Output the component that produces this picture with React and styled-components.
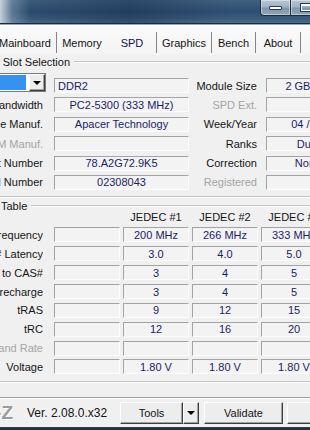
import React from 'react'
import styled, { createGlobalStyle } from 'styled-components'

const GlobalStyle = createGlobalStyle`
  html, body {
    margin: 0;
    padding: 0;
  }
  body {
    width: 310px;
    height: 430px;
    overflow: hidden;
    background: #f0f0f0;
    font-family: "Liberation Sans", Arial, sans-serif;
    font-size: 11px;
    color: #141414;
  }
`

const Window = styled.div`
  display: flex;
  flex-direction: column;
  width: 310px;
  height: 430px;
  overflow: hidden;
`

// aero caption
const TitleBar = styled.div`
  flex: none;
  height: 23px;
  display: flex;
  justify-content: flex-end;
  align-items: flex-start;
  border-bottom: 1px solid #1b2b3b;
  background:
    linear-gradient(to right, rgba(214, 222, 230, 0.9) 0, rgba(150, 170, 190, 0.45) 12px, rgba(60, 90, 120, 0) 30px),
    linear-gradient(to right, rgba(0, 0, 0, 0) 0, rgba(10, 30, 60, 0.35) 130px, rgba(0, 0, 0, 0) 230px),
    linear-gradient(to bottom, #41617f 0%, #2f4f71 50%, #3a5a7b 78%, #4d6c8b 100%);
`

const CaptionButtons = styled.div`
  display: flex;
  margin-right: -11px;
`

const CaptionButton = styled.div`
  flex: none;
  width: ${({ $w }) => $w}px;
  height: 16px;
  box-sizing: border-box;
  display: flex;
  align-items: center;
  justify-content: center;
  border: 1px solid #1e2d3d;
  border-top: none;
  border-left-width: ${({ $first }) => ($first ? 1 : 0)}px;
  border-radius: ${({ $first }) => ($first ? '0 0 0 4px' : '0')};
  background: linear-gradient(to bottom, #bac7d4 0%, #a0b2c4 45%, #8096ac 55%, #8fa5ba 100%);
  box-shadow: inset 0 0 0 1px rgba(255, 255, 255, 0.4);
`

const MinGlyph = styled.span`
  width: 11px;
  height: 2px;
  background: #fff;
  border: 1px solid #2a3a4c;
  border-radius: 1px;
`

const MaxGlyph = styled.span`
  width: 8px;
  height: 4px;
  border: 1px solid #fff;
  border-top-width: 2px;
  box-shadow: 0 0 0 1px #2a3a4c;
`

const TabStrip = styled.div`
  flex: none;
  height: 30px;
  display: flex;
  align-items: flex-end;
  margin-left: -6px;
  border-top: 1px solid #9aa8b6;
  background: linear-gradient(to bottom, #fbfbfb, #f3f3f3);
`

const Tab = styled.div`
  flex: none;
  width: ${({ $w }) => $w}px;
  height: 21px;
  margin-bottom: 2px;
  box-sizing: border-box;
  display: flex;
  align-items: center;
  justify-content: center;
  white-space: nowrap;
  border-right: 1px solid ${({ $divider }) => ($divider ? '#858585' : 'transparent')};
  color: ${({ $active }) => ($active ? '#10104a' : '#141414')};
`

const Panel = styled.div`
  flex: none;
  height: 341px;
  padding-top: 1px;
  display: flex;
  flex-direction: column;
  border-bottom: 1px solid #9d9d9d;
`

const Group = styled.section`
  display: flex;
  flex-direction: column;
  padding-bottom: ${({ $pb }) => $pb}px;
  border-bottom: 1px solid #c3c3c3;
  box-shadow: 0 1px 0 #fff;
`

const GroupHeader = styled.div`
  height: 12px;
  display: flex;
  align-items: center;
  gap: 4px;
  margin-top: ${({ $mt }) => $mt}px;
`

const Legend = styled.span`
  flex: none;
  margin-left: -40px;
  white-space: nowrap;
  line-height: 12px;
`

const Rule = styled.span`
  flex: 1;
  border-top: 1px solid #c3c3c3;
  border-bottom: 1px solid #fff;
`

const Rows = styled.div`
  display: flex;
  flex-direction: column;
  gap: ${({ $gap }) => $gap}px;
  margin-top: ${({ $mt }) => $mt}px;
`

const Row = styled.div`
  display: flex;
  align-items: center;
  height: ${({ $h }) => $h || 15}px;
`

const Label = styled.div`
  flex: none;
  width: ${({ $w }) => $w}px;
  margin-right: ${({ $mr }) => $mr}px;
  display: flex;
  justify-content: flex-end;
  overflow: hidden;
  white-space: nowrap;
  color: ${({ $dim }) => ($dim ? '#a4a4a4' : '#141414')};
`

const Field = styled.div`
  flex: none;
  width: ${({ $w }) => $w}px;
  height: 15px;
  box-sizing: border-box;
  display: flex;
  align-items: center;
  justify-content: ${({ $left }) => ($left ? 'flex-start' : 'center')};
  padding-left: ${({ $left }) => ($left ? 3 : 0)}px;
  border: 1px solid;
  border-color: #a3a3a3 #fdfdfd #fdfdfd #a3a3a3;
  background: #f3f3f3;
  color: #1c1c66;
  white-space: nowrap;
  overflow: hidden;
`

const Combo = styled.div`
  flex: none;
  width: 46px;
  height: 19px;
  margin-right: 8px;
  margin-top: -5px;
  align-self: flex-start;
  box-sizing: border-box;
  display: flex;
  gap: 3px;
  border: 1px solid #7a7a7a;
  border-left: none;
  background: #fff;
`

const ComboValue = styled.div`
  flex: 1;
  margin: 1px 0;
  background: #3592f0;
`

const ArrowButton = styled.div`
  flex: none;
  width: ${({ $w }) => $w}px;
  box-sizing: border-box;
  display: flex;
  align-items: center;
  justify-content: center;
  border: 1px solid;
  border-color: #fff #3f3f3f #3f3f3f #fff;
  box-shadow: inset -1px -1px 0 #a0a0a0;
  background: #ededed;
`

const DownArrow = styled.span`
  width: 0;
  height: 0;
  border-left: 4px solid transparent;
  border-right: 4px solid transparent;
  border-top: 4px solid #000;
`

const Cells = styled.div`
  display: flex;
  gap: 3px;
`

const HeadCell = styled.div`
  flex: none;
  width: 66px;
  text-align: center;
  white-space: nowrap;
  line-height: 11px;
`

const BottomBar = styled.div`
  flex: none;
  height: 29px;
  box-sizing: border-box;
  display: flex;
  align-items: center;
  border-top: 1px solid #fff;
`

const Logo = styled.div`
  flex: none;
  width: 13px;
  display: flex;
  justify-content: flex-end;
  overflow: hidden;
  white-space: nowrap;
  font-size: 19px;
  font-weight: bold;
  color: #9b9b9b;
  text-shadow: 1px 1px 0 #fff;
`

const Version = styled.div`
  flex: none;
  width: 93px;
  margin-left: 14px;
  font-size: 12px;
  white-space: nowrap;
`

const Button = styled.div`
  flex: none;
  width: ${({ $w }) => $w}px;
  height: 22px;
  margin-left: ${({ $ml }) => $ml || 0}px;
  box-sizing: border-box;
  display: flex;
  align-items: center;
  justify-content: center;
  border: 1px solid;
  border-color: #fff #3f3f3f #3f3f3f #fff;
  box-shadow: inset -1px -1px 0 #a0a0a0;
  background: #ededed;
  white-space: nowrap;
`

const ButtonArrow = styled(ArrowButton)`
  height: 22px;
`

const WindowEdge = styled.div`
  flex: none;
  height: 3px;
  background: linear-gradient(to bottom, #2d3f52, #1b2a3a);
`

const tabs = [
  { name: 'Mainboard', w: 63, divider: true },
  { name: 'Memory', w: 51 },
  { name: 'SPD', w: 49, divider: true, active: true },
  { name: 'Graphics', w: 55, divider: true },
  { name: 'Bench', w: 44, divider: true },
  { name: 'About', w: 45, divider: true },
]

const slotRows = [
  { label: 'Max Bandwidth', value: 'PC2-5300 (333 MHz)', right: 'SPD Ext.', rightDim: true, rightValue: '' },
  { label: 'Module Manuf.', value: 'Apacer Technology', right: 'Week/Year', rightValue: '04 / 08' },
  { label: 'DRAM Manuf.', dim: true, value: '', right: 'Ranks', rightValue: 'Dual' },
  { label: 'Part Number', value: '78.A2G72.9K5', right: 'Correction', rightValue: 'None' },
  { label: 'Serial Number', value: '02308043', right: 'Registered', rightDim: true, rightValue: '' },
]

const timings = [
  { label: 'Frequency', values: ['', '200 MHz', '266 MHz', '333 MHz'] },
  { label: 'CAS# Latency', values: ['', '3.0', '4.0', '5.0'] },
  { label: 'RAS# to CAS#', values: ['', '3', '4', '5'] },
  { label: 'RAS# Precharge', values: ['', '3', '4', '5'] },
  { label: 'tRAS', values: ['', '9', '12', '15'] },
  { label: 'tRC', values: ['', '12', '16', '20'] },
  { label: 'Command Rate', dim: true, values: ['', '', '', ''] },
  { label: 'Voltage', values: ['', '1.80 V', '1.80 V', '1.80 V'] },
]

export default function App() {
  return (
    <Window>
      <GlobalStyle />
      <TitleBar>
        <CaptionButtons>
          <CaptionButton $w={31} $first>
            <MinGlyph />
          </CaptionButton>
          <CaptionButton $w={30}>
            <MaxGlyph />
          </CaptionButton>
        </CaptionButtons>
      </TitleBar>

      <TabStrip>
        {tabs.map((t) => (
          <Tab key={t.name} $w={t.w} $divider={t.divider} $active={t.active}>
            {t.name}
          </Tab>
        ))}
      </TabStrip>

      <Panel>
        <Group $pb={6}>
          <GroupHeader $mt={0}>
            <Legend>Memory Slot Selection</Legend>
            <Rule />
          </GroupHeader>
          <Rows $gap={4.4} $mt={10}>
            <Row>
              <Combo>
                <ComboValue />
                <ArrowButton $w={16}>
                  <DownArrow />
                </ArrowButton>
              </Combo>
              <Field $w={135} $left>DDR2</Field>
              <Label $w={68} $mr={9}>Module Size</Label>
              <Field $w={84}>2 GBytes</Field>
            </Row>
            {slotRows.map((r) => (
              <Row key={r.label}>
                <Label $w={43} $mr={11} $dim={r.dim}>{r.label}</Label>
                <Field $w={135}>{r.value}</Field>
                <Label $w={68} $mr={9} $dim={r.rightDim}>{r.right}</Label>
                <Field $w={84}>{r.rightValue}</Field>
              </Row>
            ))}
          </Rows>
        </Group>

        <Group $pb={6.5}>
          <GroupHeader $mt={3}>
            <Legend>Timings Table</Legend>
            <Rule />
          </GroupHeader>
          <Row $h={11}>
            <Label $w={43} $mr={11} />
            <Cells>
              <HeadCell />
              <HeadCell>JEDEC #1</HeadCell>
              <HeadCell>JEDEC #2</HeadCell>
              <HeadCell>JEDEC #3</HeadCell>
            </Cells>
          </Row>
          <Rows $gap={3.86} $mt={4.5}>
            {timings.map((r) => (
              <Row key={r.label}>
                <Label $w={43} $mr={11} $dim={r.dim}>{r.label}</Label>
                <Cells>
                  {r.values.map((v, i) => (
                    <Field key={i} $w={66}>{v}</Field>
                  ))}
                </Cells>
              </Row>
            ))}
          </Rows>
        </Group>
      </Panel>

      <BottomBar>
        <Logo>CPU-Z</Logo>
        <Version>Ver. 2.08.0.x32</Version>
        <Button $w={63}>Tools</Button>
        <ButtonArrow $w={16}>
          <DownArrow />
        </ButtonArrow>
        <Button $w={79} $ml={5}>Validate</Button>
        <Button $w={75} $ml={4}>Close</Button>
      </BottomBar>
      <WindowEdge />
    </Window>
  )
}
